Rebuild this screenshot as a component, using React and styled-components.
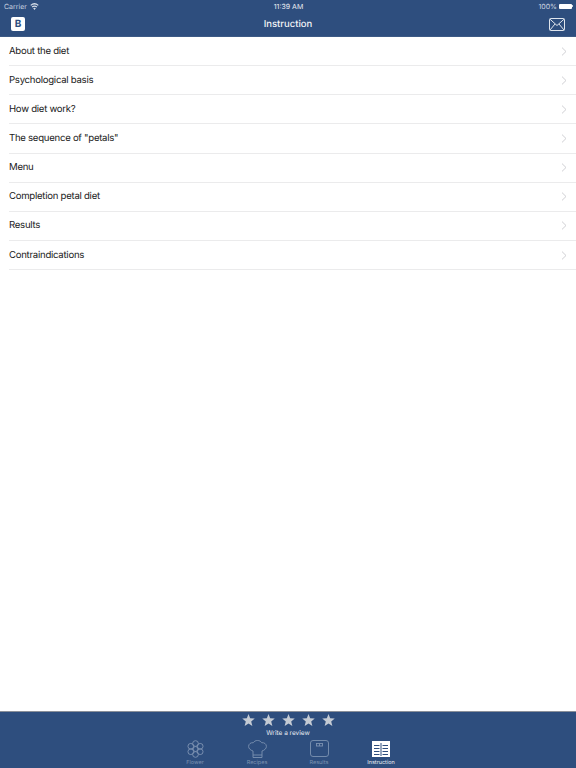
import React from "react";
import styled, { createGlobalStyle } from "styled-components";

const GlobalStyle = createGlobalStyle`
  html, body { margin: 0; padding: 0; height: 100%; background: #fff; }
  #root { height: 100%; }
  * { box-sizing: border-box; }
`;

const items = [
  "About the diet",
  "Psychological basis",
  "How diet work?",
  'The sequence of "petals"',
  "Menu",
  "Completion petal diet",
  "Results",
  "Contraindications",
];

function App() {
  return (
    <Page>
      <GlobalStyle />
      <Header>
        <StatusBar>
          <StatusLeft>
            Carrier
            <svg width="9" height="7" viewBox="0 0 12 9" fill="#d5dde8">
              <path d="M6 9 4.2 6.8a2.8 2.8 0 0 1 3.6 0Z" />
              <path d="M3.3 5.8 2.3 4.6a5.8 5.8 0 0 1 7.4 0l-1 1.2a4.2 4.2 0 0 0-5.4 0Z" />
              <path d="M1.5 3.6.4 2.4a8.6 8.6 0 0 1 11.2 0l-1.1 1.2a7 7 0 0 0-9 0Z" />
            </svg>
          </StatusLeft>
          <Clock>11:39 AM</Clock>
          <StatusRight>
            100%
            <Battery />
            <BatteryTip />
          </StatusRight>
        </StatusBar>
        <NavBar>
          <LogoBox>B</LogoBox>
          <Title>Instruction</Title>
          <svg width="16" height="13" viewBox="0 0 16 13" fill="none" stroke="#dfe5ed" strokeWidth="1">
            <rect x="0.5" y="0.5" width="15" height="12" rx="1" />
            <path d="M1 1.2 8 7.5l7-6.3M1 12l5-6M15 12l-5-6" />
          </svg>
        </NavBar>
      </Header>

      <List>
        {items.map((item) => (
          <Row key={item}>
            <RowText>{item}</RowText>
            <svg width="6" height="9" viewBox="0 0 6 9" fill="none" stroke="#cfcfd3" strokeWidth="1">
              <path d="M1 .6 5 4.500 1 8.400" />
            </svg>
          </Row>
        ))}
      </List>

      <Footer>
        <Stars>
          {[0, 1, 2, 3, 4].map((i) => (
            <svg key={i} width="13" height="12" viewBox="0 0 24 23" fill="#c4cbd4">
              <path d="M12 0l3.2 8.2 8.8.5-6.8 5.6 2.2 8.6L12 18.100l-7.400 4.800 2.200-8.600L0 8.700l8.800-.5Z" />
            </svg>
          ))}
        </Stars>
        <ReviewText>Write a review</ReviewText>
        <Tabs>
          <Tab>
            <TabIcon>
              <svg width="17" height="18" viewBox="0 0 18 19" fill="none" stroke="#7c92b1" strokeWidth="1">
                <circle cx="9" cy="9.500" r="2.600" />
                <circle cx="9" cy="3.700" r="3" />
                <circle cx="9" cy="15.300" r="3" />
                <circle cx="4" cy="6.600" r="3" />
                <circle cx="14" cy="6.600" r="3" />
                <circle cx="4" cy="12.400" r="3" />
                <circle cx="14" cy="12.400" r="3" />
              </svg>
            </TabIcon>
            <TabLabel>Flower</TabLabel>
          </Tab>
          <Tab>
            <TabIcon>
              <svg width="19" height="18" viewBox="0 0 19 18" fill="none" stroke="#7c92b1" strokeWidth="0.9">
                <path d="M5 17.500V11C2.500 10.200.6 8.600.6 6.400.6 3.900 2.800 2.400 5.300 2.700 6.200 1.200 7.700.5 9.500.5s3.300.7 4.200 2.200c2.500-.3 4.700 1.200 4.700 3.700 0 2.200-1.900 3.800-4.400 4.600v6.500Z" />
                <path d="M5 15h9" />
              </svg>
            </TabIcon>
            <TabLabel>Recipes</TabLabel>
          </Tab>
          <Tab>
            <TabIcon>
              <svg width="19" height="17" viewBox="0 0 19 17" fill="none" stroke="#7c92b1" strokeWidth="0.9">
                <rect x="0.5" y="0.5" width="18" height="16" rx="2.500" />
                <rect x="6.500" y="3.500" width="6" height="2.500" />
                <path d="M9.500 3.500v2.500" />
              </svg>
            </TabIcon>
            <TabLabel>Results</TabLabel>
          </Tab>
          <Tab>
            <TabIcon>
              <svg width="18" height="16" viewBox="0 0 18 16">
                <rect width="18" height="16" fill="#fff" />
                <path d="M9 2v13M2 4.500h5.500M2 7.500h5.500M2 10.500h5.500M2 13.500h5.500M10.500 4.500H16M10.500 7.500H16M10.500 10.500H16M10.500 13.500H16" stroke="#2e4e7e" strokeWidth="1" />
              </svg>
            </TabIcon>
            <TabLabel $active>Instruction</TabLabel>
          </Tab>
        </Tabs>
      </Footer>
    </Page>
  );
}

export default App;

const Page = styled.div`
  width: 576px;
  height: 768px;
  display: flex;
  flex-direction: column;
  overflow: hidden;
  font-family: Inter, "Liberation Sans", Arial, sans-serif;
  text-rendering: geometricPrecision;
  background: #fff;
`;

const Header = styled.header`
  height: 37px;
  flex: none;
  background: #2e4e7e;
  color: #fff;
  border-bottom: 1px solid #3d5a85;
`;

const StatusBar = styled.div`
  height: 12px;
  padding: 0 3px 0 4px;
  display: grid;
  grid-template-columns: 1fr auto 1fr;
  align-items: center;
  font-size: 7px;
`;

const StatusLeft = styled.div`
  display: flex;
  align-items: center;
  gap: 3px;
  color: #ccd5e1;
`;

const Clock = styled.div`
  color: #eef1f5;
`;

const StatusRight = styled.div`
  display: flex;
  align-items: center;
  justify-content: flex-end;
  color: #ccd5e1;
`;

const Battery = styled.span`
  width: 13px;
  height: 5px;
  margin-left: 2px;
  background: #fff;
  border-radius: 1px;
`;

const BatteryTip = styled.span`
  width: 1px;
  height: 2px;
  background: #ccd5e1;
`;

const NavBar = styled.div`
  height: 24px;
  padding: 0 11px;
  display: flex;
  align-items: center;
  justify-content: space-between;
  position: relative;
`;

const LogoBox = styled.div`
  width: 14px;
  height: 14px;
  background: #fff;
  border-radius: 2px;
  color: #2e4e7e;
  font-size: 10px;
  font-weight: 700;
  display: flex;
  align-items: center;
  justify-content: center;
`;

const Title = styled.div`
  position: absolute;
  left: 0;
  right: 0;
  text-align: center;
  font-size: 9.5px;
  font-weight: 500;
  color: #f2f4f7;
`;

const List = styled.main`
  flex: 1;
`;

const Row = styled.div`
  height: 29.15px;
  margin-left: 9px;
  padding: 0 9px 0 0;
  display: flex;
  align-items: center;
  justify-content: space-between;
  border-bottom: 1px solid #ebebec;
`;

const RowText = styled.span`
  font-size: 9.6px;
  letter-spacing: -0.27px;
  color: #1a1a1a;
`;

const Footer = styled.footer`
  height: 57px;
  flex: none;
  background: #2e4e7e;
  border-top: 1px solid #8b9099;
  display: flex;
  flex-direction: column;
  align-items: center;
`;

const Stars = styled.div`
  display: flex;
  gap: 7px;
  margin: 2px 0 0 0;
  height: 12px;
`;

const ReviewText = styled.div`
  margin-top: 3px;
  font-size: 6.5px;
  line-height: 9px;
  color: #e6eaf0;
`;

const Tabs = styled.nav`
  margin-top: 1px;
  display: flex;
  gap: 2px;
`;

const Tab = styled.div`
  width: 60px;
  display: flex;
  flex-direction: column;
  align-items: center;
`;

const TabIcon = styled.div`
  height: 19px;
  display: flex;
  align-items: center;
  justify-content: center;
`;

const TabLabel = styled.span`
  font-size: 5.500px;
  line-height: 10px;
  color: ${(props) => (props.$active ? "#e6eaf0" : "#7c92b1")};
`;
